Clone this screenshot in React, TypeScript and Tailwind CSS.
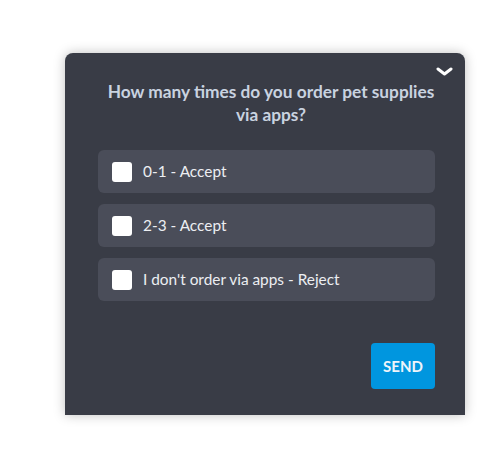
const options = ["0-1 - Accept", "2-3 - Accept", "I don't order via apps - Reject"];

export default function App() {
  return (
    <div className="min-h-[468px] bg-white pt-[53px] pl-[65px] font-['Lato',sans-serif]">
      <div className="relative w-[400px] h-[362px] bg-[#393c46] rounded-t-lg shadow-[0_0_12px_rgba(0,0,0,0.25)] pt-[27px] pl-[33px] pr-[30px]">
        <button className="absolute top-[14px] right-[12px] text-white">
          <svg width="17" height="10" viewBox="0 0 17 10" fill="none">
            <path d="M2 2l6.5 5 6.5-5" stroke="#ffffff" strokeWidth="3" strokeLinecap="round" strokeLinejoin="round" />
          </svg>
        </button>
        <h2 className="ml-[9px] text-center text-[17.3px] leading-[23px] font-bold text-[#c9d3e0]">
          How many times do you order pet supplies via apps?
        </h2>
        <div className="mt-[24px] flex flex-col gap-[11px]">
          {options.map((o) => (
            <label
              key={o}
              className="flex h-[43px] items-center gap-[11px] rounded-md bg-[#4a4d59] pl-[14px] text-[15.4px] text-[#eceef2]"
            >
              <span className="h-[20px] w-[20px] rounded-[3px] bg-white" />
              {o}
            </label>
          ))}
        </div>
        <div className="mt-[42px] flex justify-end">
          <button className="h-[46px] w-[64px] rounded bg-[#0096df] text-[15px] font-bold text-[#eef4fa]">
            SEND
          </button>
        </div>
      </div>
    </div>
  );
}
